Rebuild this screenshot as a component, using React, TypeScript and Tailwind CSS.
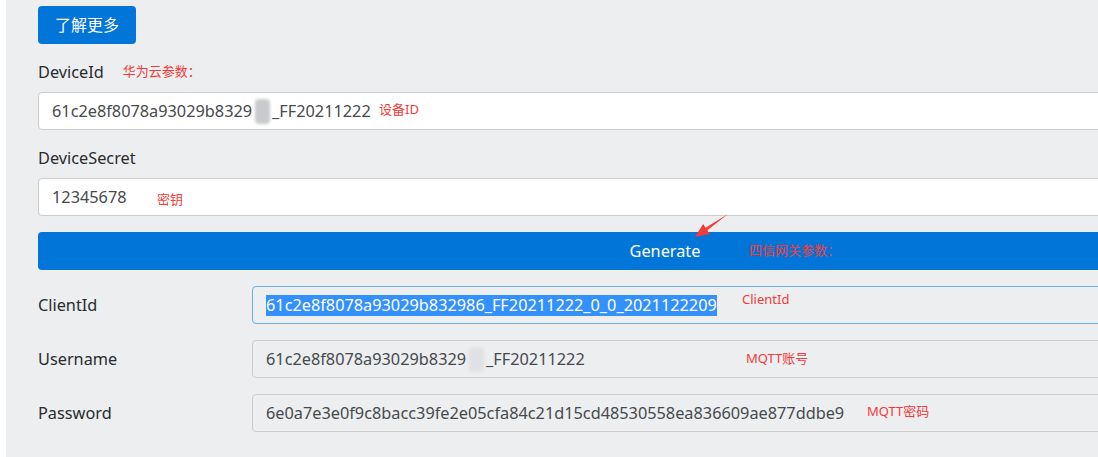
import { ReactNode } from 'react';

const FONT = { fontFamily: '"Noto Sans", "Noto Sans CJK SC", sans-serif' };

function Note({ children, className }: { children: ReactNode; className: string }) {
  return (
    <span className={`pointer-events-none absolute whitespace-nowrap text-[13px] leading-[18px] text-[#f23b3b] ${className}`}>
      {children}
    </span>
  );
}

// hidden chars in the screenshot were smudged out
function Blur({ light }: { light?: boolean }) {
  return (
    <span className="inline-flex w-[20px] justify-center">
      <span
        className={`inline-block h-[25px] w-[15px] rounded-[4px] blur-[1.5px] ${
          light ? 'bg-[#e0e1e3]' : 'bg-[#c9cacd]'
        }`}
      />
    </span>
  );
}

function Field({ children, readOnly, focused }: { children: ReactNode; readOnly?: boolean; focused?: boolean }) {
  return (
    <div
      className={`relative flex h-[38px] flex-1 items-center whitespace-nowrap rounded border px-[13px] text-[16.3px] text-[#464a4c] ${
        focused ? 'border-[#66afe9] bg-[#eceef0]' : readOnly ? 'border-[#cccccc] bg-[#eceef0]' : 'border-[#cccccc] bg-white'
      }`}
    >
      {children}
    </div>
  );
}

export default function App() {
  return (
    <div className="relative flex h-[457px] w-[1098px] overflow-hidden bg-white" style={FONT}>
      <div className="w-[6px] shrink-0 bg-white" />
      <div className="flex-1 bg-[#eceef0] pl-8 pt-[6px]">
        <div className="flex w-[1254px] flex-col">
          <button className="h-[38px] w-[98px] rounded bg-[#0275d8] text-base text-white">了解更多</button>

          <div className="mt-4 flex h-6 items-center text-[16.3px] text-[#292b2c]">
            DeviceId
            <span className="ml-[19px] text-[13px] text-[#f23b3b]">华为云参数：</span>
          </div>
          <div className="mt-2 flex">
            <Field>
              61c2e8f8078a93029b8329
              <Blur />
              _FF20211222
              <Note className="left-[340px] top-[7px]">设备ID</Note>
            </Field>
          </div>

          <div className="mt-4 flex h-6 items-center text-[16.3px] text-[#292b2c]">DeviceSecret</div>
          <div className="mt-2 flex">
            <Field>
              12345678
              <Note className="left-[118px] top-[11px]">密钥</Note>
            </Field>
          </div>

          <button className="relative mt-4 h-[38px] w-full rounded bg-[#0275d8] text-[16.3px] text-white">
            Generate
            <Note className="left-[711px] top-[9px]">四信网关参数：</Note>
          </button>

          <div className="mt-4 flex items-center">
            <div className="w-[214px] text-[16.3px] text-[#292b2c]">ClientId</div>
            <Field focused>
              <span className="bg-[#3390ff] leading-[21px] text-white">
                61c2e8f8078a93029b832986_FF20211222_0_0_2021122209
              </span>
              <Note className="left-[489px] top-[3px]">ClientId</Note>
            </Field>
          </div>

          <div className="mt-4 flex items-center">
            <div className="w-[214px] text-[16.3px] text-[#292b2c]">Username</div>
            <Field readOnly>
              61c2e8f8078a93029b8329
              <Blur light />
              _FF20211222
              <Note className="left-[493px] top-[8px]">MQTT账号</Note>
            </Field>
          </div>

          <div className="mt-4 flex items-center">
            <div className="w-[214px] text-[16.3px] text-[#292b2c]">Password</div>
            <Field readOnly>
              6e0a7e3e0f9c8bacc39fe2e05cfa84c21d15cd48530558ea836609ae877ddbe9
              <Note className="left-[614px] top-[7px]">MQTT密码</Note>
            </Field>
          </div>
        </div>
      </div>

      <svg className="pointer-events-none absolute left-0 top-0" width="1098" height="457">
        <polygon
          points="728,214 707.4,230.2 709.9,233.9 695,237 703.1,224.1 705.6,227.8"
          fill="#f23b3b"
        />
      </svg>
    </div>
  );
}
